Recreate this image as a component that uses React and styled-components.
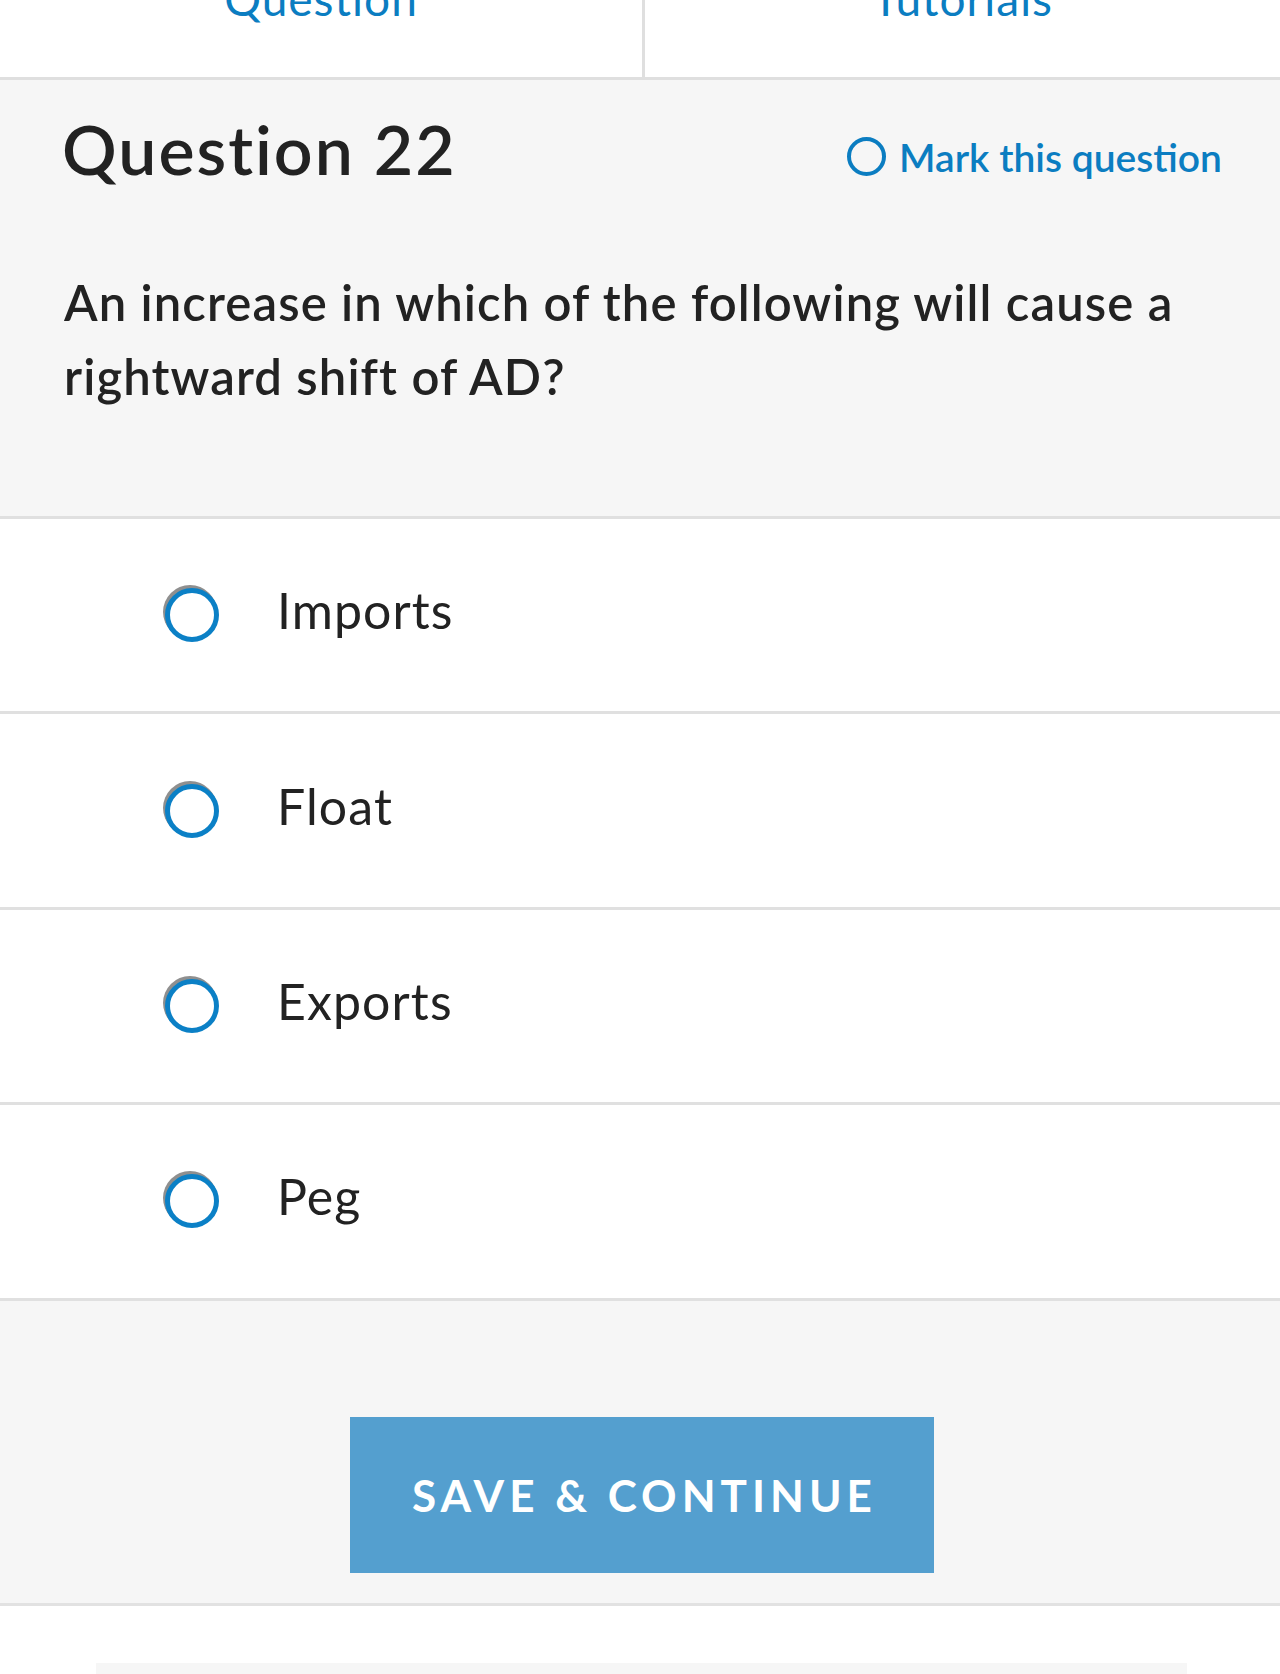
import React from 'react'
import styled, { createGlobalStyle } from 'styled-components'

const options = ['Imports', 'Float', 'Exports', 'Peg']

const App = () => {
  return (
    <>
      <GlobalStyle />
      <Page>
        <TabBar>
          <Tab>
            <TabLabel>Question</TabLabel>
          </Tab>
          <Tab $divider>
            <TabLabel>Tutorials</TabLabel>
          </Tab>
        </TabBar>

        <QuestionPanel>
          <HeaderRow>
            <Title>Question 22</Title>
            <MarkButton>
              <MarkCircle />
              Mark this question
            </MarkButton>
          </HeaderRow>
          <Prompt>
            An increase in which of the following will cause a rightward shift of AD?
          </Prompt>
        </QuestionPanel>

        <OptionList>
          {options.map((opt) => (
            <OptionRow key={opt}>
              <Radio />
              <OptionText>{opt}</OptionText>
            </OptionRow>
          ))}
        </OptionList>

        <Footer>
          <SaveButton>SAVE &amp; CONTINUE</SaveButton>
        </Footer>

        <BottomSpace>
          <NextCard />
        </BottomSpace>
      </Page>
    </>
  )
}

const GlobalStyle = createGlobalStyle`
    html, body {
        margin: 0;
        padding: 0;
        background: #fff;
    }
    body {
        font-family: Lato, "Open Sans", sans-serif;
        color: #222;
    }
`

const Page = styled.div`
    width: 1280px;
    overflow: hidden;
`

const TabBar = styled.div`
    display: grid;
    grid-template-columns: 642px 1fr;
    height: 77px;
    border-bottom: 3px solid #dfdfdf;
    overflow: hidden;
`

const Tab = styled.div`
    display: flex;
    justify-content: center;
    align-items: flex-start;
    border-left: ${(p) => (p.$divider ? '3px solid #dfdfdf' : 'none')};
`

const TabLabel = styled.span`
    font-size: 46px;
    line-height: 1;
    letter-spacing: 1px;
    margin-top: -24px;
    color: #0b7dc1;
`

const QuestionPanel = styled.section`
    background: #f6f6f6;
    padding: 28px 58px 0 62px;
    border-bottom: 3px solid #e0e0e0;
    height: 439px;
    box-sizing: border-box;
`

const HeaderRow = styled.div`
    display: flex;
    justify-content: space-between;
    align-items: center;
`

const Title = styled.h1`
    margin: 0;
    font-size: 68px;
    line-height: 1.2;
    font-weight: 600;
    letter-spacing: 2px;
    color: #222;
`

const MarkButton = styled.button`
    display: flex;
    align-items: center;
    gap: 13px;
    margin-top: 16px;
    padding: 0;
    border: none;
    background: transparent;
    font-family: inherit;
    font-size: 39px;
    font-weight: 600;
    color: #0b7dc1;
    cursor: pointer;
`

const MarkCircle = styled.span`
    width: 39px;
    height: 39px;
    box-sizing: border-box;
    border: 4px solid #0b7dc1;
    border-radius: 50%;
`

const Prompt = styled.p`
    margin: 75px 0 0 2px;
    font-size: 49px;
    line-height: 74px;
    font-weight: 600;
    letter-spacing: 1.1px;
    color: #222;
`

const OptionList = styled.div`
    display: flex;
    flex-direction: column;
`

const OptionRow = styled.label`
    display: flex;
    align-items: center;
    gap: 58px;
    height: 192.4px;
    padding-left: 165px;
    border-bottom: 3px solid #e0e0e0;
    background: #fff;
`

const Radio = styled.span`
    width: 54px;
    height: 54px;
    flex-shrink: 0;
    box-sizing: border-box;
    border: 5px solid #0b80c6;
    border-radius: 50%;
    background: #fff;
    box-shadow: -2px -3px 0 0 #8f8f8f;
`

const OptionText = styled.span`
    font-size: 50px;
    letter-spacing: 1.1px;
    margin-bottom: 10px;
    color: #222;
`

const Footer = styled.div`
    background: #f6f6f6;
    padding: 116px 0 30px;
    border-bottom: 3px solid #e2e2e2;
    display: flex;
    justify-content: center;
`

const SaveButton = styled.button`
    width: 584px;
    height: 156px;
    margin-left: 4px;
    border: none;
    background: #549fcf;
    color: #fff;
    font-family: inherit;
    font-size: 44px;
    font-weight: 700;
    letter-spacing: 5px;
    text-indent: 5px;
`

const BottomSpace = styled.div`
    padding: 57px 93px 0 96px;
`

const NextCard = styled.div`
    height: 11px;
    background: #f6f6f6;
`

export default App
